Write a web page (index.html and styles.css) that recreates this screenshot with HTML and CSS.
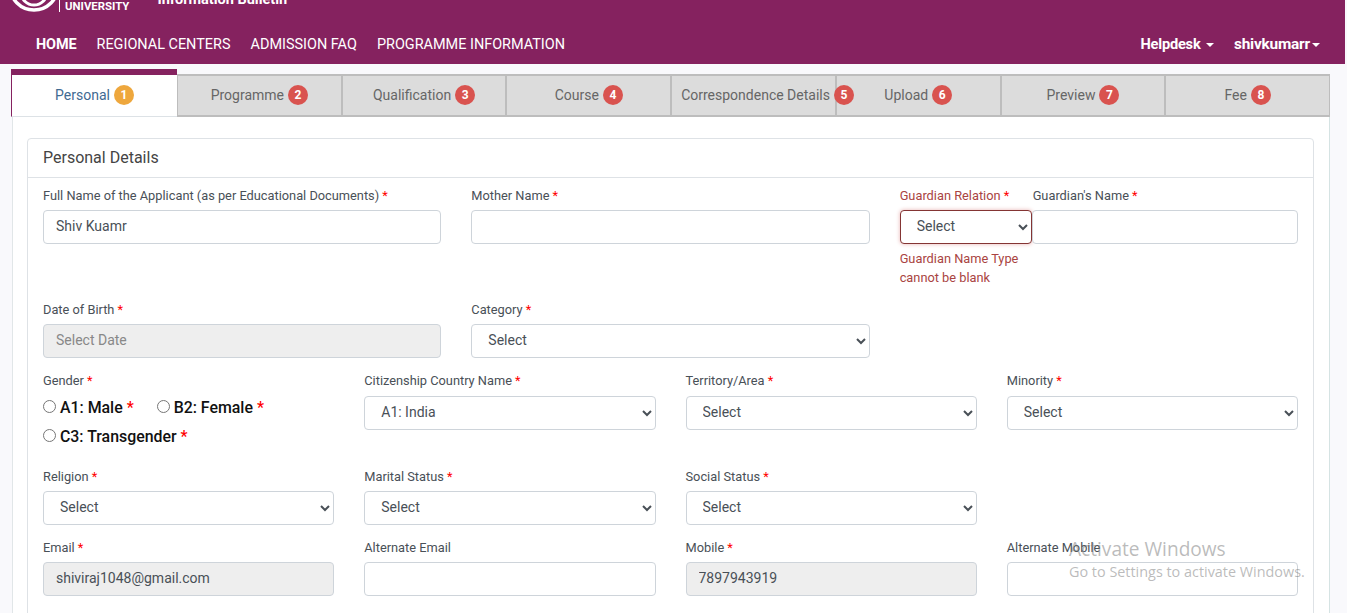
FILE: index.html
```html
<!DOCTYPE html>
<html lang="en">
<head>
  <meta charset="UTF-8" />
  <title>Personal Details</title>
  <link rel="stylesheet" href="styles.css">
</head>
<body>
  <header class="topbar">
    <div class="brand">
      <svg class="brand-logo" width="46" height="14" viewBox="0 0 46 14">
        <circle cx="23" cy="-14" r="24" fill="none" stroke="#fff" stroke-width="3.5"/>
        <circle cx="23" cy="-8" r="13" fill="none" stroke="#fff" stroke-width="3"/>
      </svg>
      <div class="brand-name">UNIVERSITY</div>
      <div class="brand-sub">Information Bulletin</div>
    </div>
    <nav class="nav">
      <a class="nav-link active">HOME</a>
      <a class="nav-link">REGIONAL CENTERS</a>
      <a class="nav-link">ADMISSION FAQ</a>
      <a class="nav-link">PROGRAMME INFORMATION</a>
      <div class="nav-right">
        <a class="nav-user">Helpdesk <span class="caret"></span></a>
        <a class="nav-user username">shivkumarr<span class="caret"></span></a>
      </div>
    </nav>
  </header>

  <main class="page">
    <div class="tabs">
      <div class="tab active">Personal <span class="badge current">1</span></div>
      <div class="tab">Programme <span class="badge">2</span></div>
      <div class="tab">Qualification <span class="badge">3</span></div>
      <div class="tab">Course <span class="badge">4</span></div>
      <div class="tab">Correspondence Details <span class="badge">5</span></div>
      <div class="tab">Upload <span class="badge">6</span></div>
      <div class="tab">Preview <span class="badge">7</span></div>
      <div class="tab">Fee <span class="badge">8</span></div>
    </div>

    <div class="panel">
      <section class="card">
        <div class="card-header">Personal Details</div>
        <form class="card-body">
          <div class="form-row cols-3">
            <div>
              <label class="field-label">Full Name of the Applicant (as per Educational Documents) <i>*</i></label>
              <input class="control" type="text" value="Shiv Kuamr">
            </div>
            <div>
              <label class="field-label">Mother Name <i>*</i></label>
              <input class="control" type="text">
            </div>
            <div class="guardian">
              <div class="guardian-type has-error">
                <label class="field-label">Guardian Relation <i>*</i></label>
                <select class="control"><option>Select</option></select>
                <div class="error-text">Guardian Name Type cannot be blank</div>
              </div>
              <div class="guardian-name">
                <label class="field-label">Guardian's Name <i>*</i></label>
                <input class="control" type="text">
              </div>
            </div>
          </div>

          <div class="form-row cols-3">
            <div>
              <label class="field-label">Date of Birth <i>*</i></label>
              <input class="control" type="text" placeholder="Select Date" disabled>
            </div>
            <div>
              <label class="field-label">Category <i>*</i></label>
              <select class="control"><option>Select</option></select>
            </div>
          </div>

          <div class="form-row cols-4 gender-row">
            <div>
              <label class="field-label">Gender <i>*</i></label>
              <div class="radios">
                <label class="radio"><input type="radio" name="gender"> A1: Male <i>*</i></label>
                <label class="radio"><input type="radio" name="gender"> B2: Female <i>*</i></label>
                <label class="radio"><input type="radio" name="gender"> C3: Transgender <i>*</i></label>
              </div>
            </div>
            <div>
              <label class="field-label">Citizenship Country Name <i>*</i></label>
              <select class="control"><option>A1: India</option></select>
            </div>
            <div>
              <label class="field-label">Territory/Area <i>*</i></label>
              <select class="control"><option>Select</option></select>
            </div>
            <div>
              <label class="field-label">Minority <i>*</i></label>
              <select class="control"><option>Select</option></select>
            </div>
          </div>

          <div class="form-row cols-4">
            <div>
              <label class="field-label">Religion <i>*</i></label>
              <select class="control"><option>Select</option></select>
            </div>
            <div>
              <label class="field-label">Marital Status <i>*</i></label>
              <select class="control"><option>Select</option></select>
            </div>
            <div>
              <label class="field-label">Social Status <i>*</i></label>
              <select class="control"><option>Select</option></select>
            </div>
          </div>

          <div class="form-row cols-4">
            <div>
              <label class="field-label">Email <i>*</i></label>
              <input class="control" type="text" value="shiviraj1048@gmail.com" disabled>
            </div>
            <div>
              <label class="field-label">Alternate Email</label>
              <input class="control" type="text">
            </div>
            <div>
              <label class="field-label">Mobile <i>*</i></label>
              <input class="control" type="text" value="7897943919" disabled>
            </div>
            <div>
              <label class="field-label">Alternate Mobile</label>
              <input class="control" type="text">
            </div>
          </div>
        </form>
      </section>
    </div>
  </main>

  <div class="activate">
    <div class="activate-title">Activate Windows</div>
    <div class="activate-sub">Go to Settings to activate Windows.</div>
  </div>
</body>
</html>
```

FILE: styles.css
```css
html, body {
  height: 613px;
  overflow: hidden;
}
body {
  margin: 0;
  background: #f9f9fc;
  color: #495057;
  font-family: Roboto, "Liberation Sans", sans-serif;
  font-size: 14px;
}

/* header */
.topbar {
  height: 64px;
  margin-right: 2px;
  background: #85225f;
  color: #fff;
}
.brand {
  display: flex;
  height: 24px;
  overflow: hidden;
  align-items: flex-start;
  padding-left: 11px;
}
.brand-logo {
  display: block;
}
.brand-name {
  height: 12px;
  margin-left: 2px;
  padding-left: 5px;
  border-left: 1px solid #fff;
  font-size: 11.4px;
  font-weight: 700;
  line-height: 13px;
}
.brand-sub {
  margin: -8px 0 0 28px;
  font-size: 14.5px;
  font-weight: 700;
  line-height: 16px;
}
.nav {
  display: flex;
  align-items: center;
  gap: 20px;
  height: 40px;
  padding: 0 25px 0 36px;
}
.nav-link {
  font-size: 14.45px;
}
.nav-link.active {
  font-weight: 700;
  letter-spacing: -0.1px;
}
.nav-right {
  display: flex;
  gap: 20px;
  margin-left: auto;
}
.nav-user {
  font-size: 14.6px;
  font-weight: 700;
  letter-spacing: -0.2px;
}
.nav-user.username {
  font-size: 15.4px;
}
.caret {
  display: inline-block;
  margin-left: 2px;
  border-top: 4px solid #fff;
  border-left: 4px solid transparent;
  border-right: 4px solid transparent;
  vertical-align: 2px;
}

/* tabs */
.page {
  padding: 5px 17px 0 11px;
}
.tabs {
  display: flex;
  align-items: flex-end;
  height: 48px;
}
.tab {
  display: flex;
  flex: 1 1 0;
  min-width: 0;
  align-items: center;
  justify-content: safe center;
  gap: 4px;
  box-sizing: border-box;
  height: 43px;
  padding: 0 9px 1px;
  background: #dcdcdc;
  border: 2px solid #bdbdbd;
  border-left-width: 1px;
  border-right-width: 1px;
  color: #666;
  font-size: 14px;
  white-space: nowrap;
}
.tab.active {
  flex: 0 0 166px;
  height: 48px;
  background: #fff;
  border: 0;
  border-top: 6px solid #85225f;
  border-left: 1px solid #85225f;
  border-bottom: 1px solid #dde2e6;
  color: #3f6a92;
}
.badge {
  position: relative;
  z-index: 1;
  flex: none;
  width: 20px;
  height: 20px;
  border-radius: 50%;
  background: #d9534f;
  color: #fff;
  font-size: 12px;
  font-weight: 700;
  line-height: 20px;
  text-align: center;
}
.badge.current {
  background: #eea73d;
}

/* form */
.panel {
  height: 496px;
  overflow: hidden;
  margin-left: 1px;
  padding: 21px 15px 0 14px;
  background: #fff;
  border-left: 1px solid #e1e6e8;
  border-right: 1px solid #d5e3e3;
}
.card {
  min-height: 520px;
  border: 1px solid #dee2e6;
  border-radius: 4px;
}
.card-header {
  height: 38px;
  padding-left: 15px;
  border-bottom: 1px solid #dee2e6;
  color: #444;
  font-size: 16px;
  line-height: 37px;
}
.card-body {
  padding: 8px 15px 0;
}
.form-row {
  display: grid;
  column-gap: 30px;
  margin-bottom: 13px;
}
.cols-3 {
  grid-template-columns: repeat(3, 1fr);
}
.cols-4 {
  grid-template-columns: repeat(4, 1fr);
}
.field-label {
  display: block;
  height: 20px;
  margin-bottom: 4px;
  color: #495057;
  font-size: 12.8px;
  line-height: 20px;
  white-space: nowrap;
}
.gender-row .field-label {
  margin-bottom: 5px;
}
.field-label i,
.radio i {
  color: #f00;
  font-style: normal;
}
.control {
  display: block;
  box-sizing: border-box;
  width: 100%;
  height: 34px;
  padding: 5px 12px 7px;
  background: #fff;
  border: 1px solid #ced4da;
  border-radius: 4px;
  color: #495057;
  font-family: Roboto, "Liberation Sans", sans-serif;
  font-size: 14px;
}
.control:disabled {
  background: #eee;
}
.control::placeholder {
  color: #888;
}
.guardian {
  display: grid;
  grid-template-columns: 132px 1fr;
}
.guardian-name .field-label {
  padding-left: 1px;
}
.has-error .field-label,
.error-text {
  color: #a94442;
}
.has-error .control {
  border-color: #843534;
  box-shadow: 0 0 4px #e8b4b3;
}
.error-text {
  margin-top: 5px;
  font-size: 12.8px;
  line-height: 19px;
}
.radios {
  display: flex;
  flex-wrap: wrap;
  gap: 7px 23px;
  padding: 1px 0 6px;
}
.radio {
  color: #111;
  font-size: 15.9px;
  font-weight: 500;
  line-height: 22px;
}
.radio input {
  margin: 0;
}

/* windows watermark */
.activate {
  position: absolute;
  left: 1069px;
  top: 537px;
  color: rgba(120, 120, 120, 0.5);
  font-family: "Open Sans", sans-serif;
}
.activate-title {
  font-size: 19.1px;
  line-height: 25px;
}
.activate-sub {
  font-size: 14.4px;
  line-height: 20px;
}
```
